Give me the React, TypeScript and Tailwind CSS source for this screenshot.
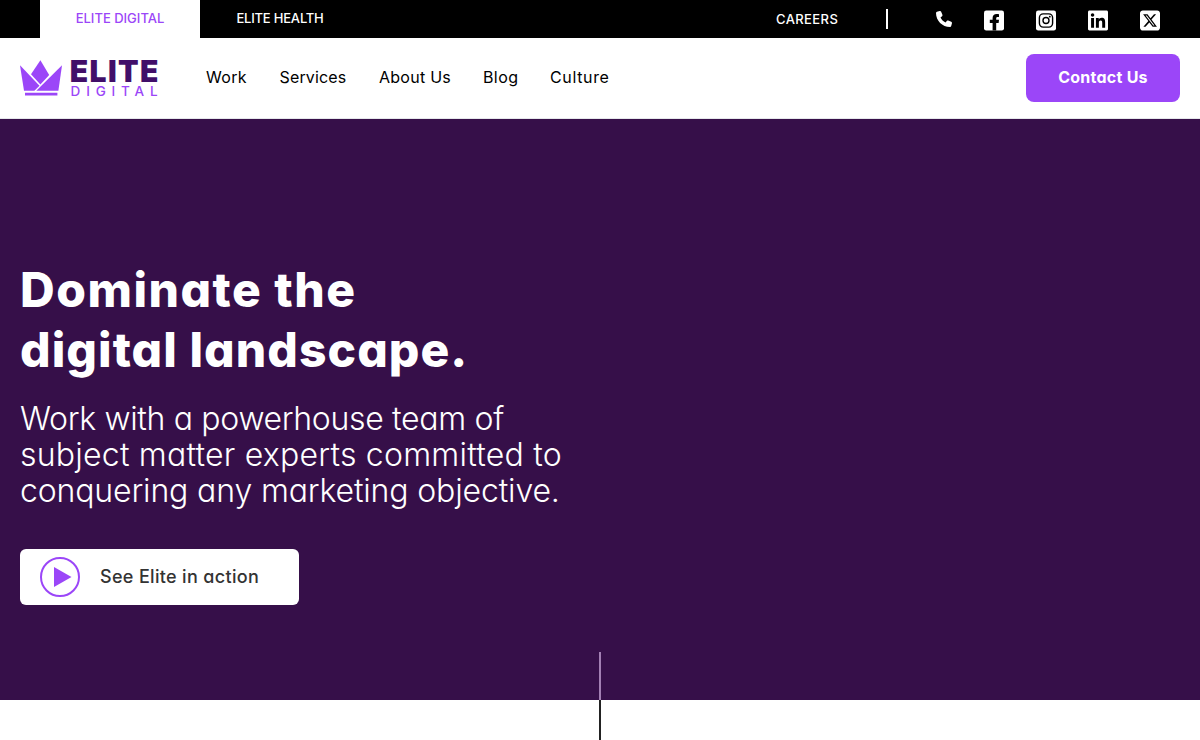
import { FaLinkedin, FaPhone, FaSquareXTwitter } from 'react-icons/fa6';

const navLinks = [
  { label: 'Work', className: 'w-[41.5px] tracking-[0.3px]' },
  { label: 'Services', className: 'w-[67.5px] tracking-[0.15px]' },
  { label: 'About Us', className: 'w-[72px] tracking-[0.25px]' },
  { label: 'Blog', className: 'w-[35px] tracking-[0.4px]' },
  { label: 'Culture', className: 'w-[60px] tracking-[0.65px]' },
];

function FacebookIcon({ className }: { className?: string }) {
  return (
    <svg className={className} viewBox="0 -1.5 20 23">
      <rect width="20" height="20" rx="2.2" fill="white" />
      <path
        d="M8.6 20 V12.4 H5.8 V9.2 H8.6 V7.6 C8.6 5 10.2 3.6 12.6 3.6 C13.7 3.6 15 3.8 15 3.8 V6.6 H13.6 C12.6 6.6 12.2 7.2 12.2 8 V9.2 H15 L14.6 12.4 H12.2 V20 Z"
        fill="black"
      />
    </svg>
  );
}

function InstagramIcon({ className }: { className?: string }) {
  return (
    <svg className={className} viewBox="0 -1.5 20 23">
      <rect width="20" height="20" rx="2.2" fill="white" />
      <g fill="none" stroke="black" strokeWidth="1.4">
        <rect x="3.4" y="3.4" width="13.2" height="13.2" rx="3.8" />
        <circle cx="10" cy="10" r="3" />
      </g>
      <circle cx="13.8" cy="6.2" r="0.9" fill="black" />
    </svg>
  );
}

const socialLinks = [
  { label: 'Facebook', Icon: FacebookIcon },
  { label: 'Instagram', Icon: InstagramIcon },
  { label: 'LinkedIn', Icon: FaLinkedin },
  { label: 'X', Icon: FaSquareXTwitter },
];

function Logo() {
  return (
    <svg className="h-10 w-[140px] overflow-visible" viewBox="0 0 140 40">
      {/* Crown */}
      <g fill="#9b46f8">
        <path d="M0 7.3 L19.5 27.7 L14.4 32.7 H4 Z" />
        <path d="M20.4 2.3 L29.2 17 L20.4 26.4 L11 16.3 Z" />
        <path d="M42 7.3 L38.4 32.7 H16.3 Z" />
        <path d="M5 34.8 H37.4 V37.5 H5 Z" />
      </g>
      {/* Wordmark */}
      <text x="49.8" y="24.4" textLength="88.6" className="text-[30px] font-black" fill="#410f69">
        ELITE
      </text>
      <text x="50.6" y="37.7" textLength="87" className="text-[13.5px] font-medium" fill="#9b46f8">
        DIGITAL
      </text>
    </svg>
  );
}

function TopBar() {
  return (
    <div className="flex h-[38px] items-stretch justify-between bg-black px-10 text-[13px] font-medium text-white">
      <div className="flex">
        <a href="#" className="flex w-40 items-center justify-center whitespace-nowrap bg-white text-[#9b46f8]">
          ELITE DIGITAL
        </a>
        <a href="#" className="flex w-40 items-center justify-center whitespace-nowrap tracking-[-0.2px]">
          ELITE HEALTH
        </a>
      </div>
      <div className="flex items-center">
        <a href="#" className="mr-12 w-[62px] whitespace-nowrap pt-0.5 tracking-[0.4px]">CAREERS</a>
        <div className="mr-12 h-5 w-0.5 bg-white" />
        <a href="#" aria-label="Phone">
          <FaPhone className="mr-8 size-4" />
        </a>
        <div className="flex gap-8 pt-0.5">
          {socialLinks.map(({ label, Icon }) => (
            <a key={label} href="#" aria-label={label}>
              <Icon className="h-[23px] w-5" />
            </a>
          ))}
        </div>
      </div>
    </div>
  );
}

function Header() {
  return (
    <header className="flex h-[81px] items-center justify-between border-b border-gray-200 bg-white px-5">
      <div className="flex items-center">
        <Logo />
        <nav className="ml-[46px] flex gap-8 pb-0.5 text-base text-black">
          {navLinks.map((link) => (
            <a key={link.label} href="#" className={`whitespace-nowrap ${link.className}`}>
              {link.label}
            </a>
          ))}
        </nav>
      </div>
      <a
        href="#"
        className="flex h-12 w-[154px] items-center justify-center whitespace-nowrap rounded-lg bg-[#9b46f8] pb-0.5 text-base font-bold tracking-[0.25px] text-white"
      >
        Contact Us
      </a>
    </header>
  );
}

function Hero() {
  return (
    <section className="flex h-[581px] flex-col items-start bg-[#360f49] px-5 pt-[141px] text-white">
      <h1 className="whitespace-nowrap text-5xl leading-[60px] font-extrabold">
        <span className="block tracking-[1.5px]">Dominate the</span>
        <span className="block tracking-[1.05px]">digital landscape.</span>
      </h1>
      <p className="mt-[21px] whitespace-nowrap text-[32px] leading-9 font-light">
        <span className="block tracking-[-0.32px]">Work with a powerhouse team of</span>
        <span className="block tracking-[0.22px]">subject matter experts committed to</span>
        <span className="block tracking-[-0.15px]">conquering any marketing objective.</span>
      </p>
      <button className="mt-10 flex h-14 w-[279px] items-center gap-5 rounded-md bg-white px-5 text-lg font-medium text-[#333]">
        <svg className="size-10 shrink-0" viewBox="0 0 40 40">
          <circle cx="20" cy="20" r="19" fill="none" stroke="#9b46f8" strokeWidth="2" />
          <path d="M14 10 L31.5 20 L14 30 Z" fill="#9b46f8" />
        </svg>
        <span className="whitespace-nowrap tracking-[0.33px]">See Elite in action</span>
      </button>
      <div className="mt-[47px] h-12 w-0.5 self-center bg-[#a380b4]" />
    </section>
  );
}

export default function App() {
  return (
    <div className="h-[740px] overflow-hidden bg-white font-['Inter',sans-serif] [font-feature-settings:'cv11']">
      <TopBar />
      <Header />
      <Hero />
      <div className="flex justify-center">
        <div className="h-10 w-0.5 bg-[#222]" />
      </div>
    </div>
  );
}
